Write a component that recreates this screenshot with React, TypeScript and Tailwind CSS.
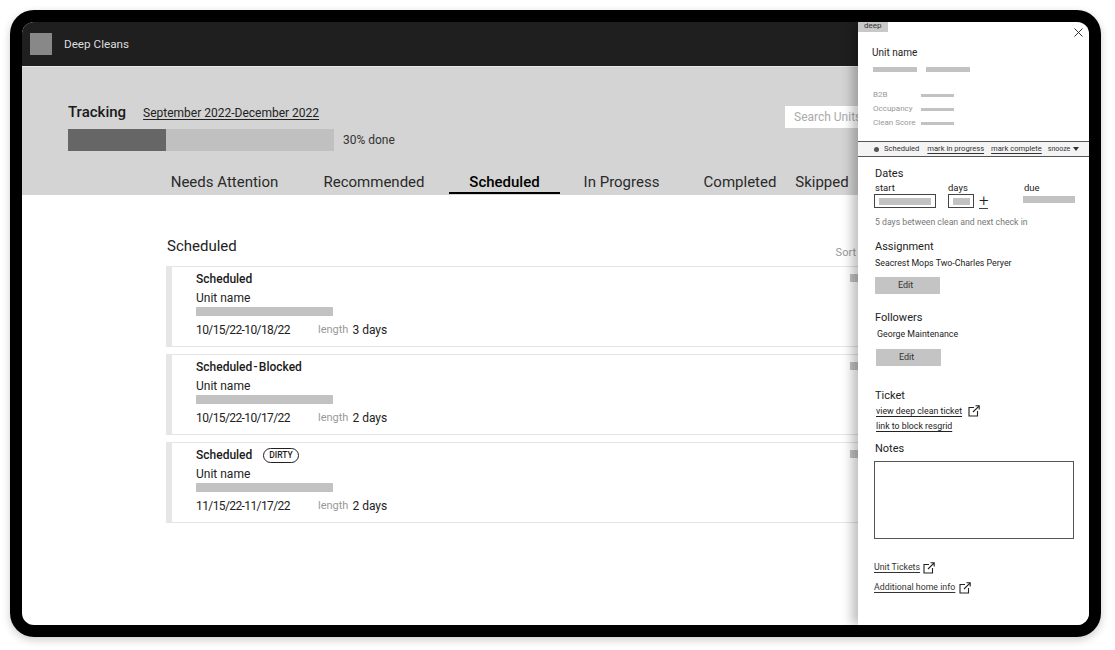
import { X } from "lucide-react";

const font = { fontFamily: "Roboto, sans-serif" };

const cards = [
    { title: "Scheduled", dates: "10/15/22-10/18/22", days: "3 days", gap: "mt-[9px]" },
    { title: "Scheduled\u200a-\u200aBlocked", dates: "10/15/22-10/17/22", days: "2 days", gap: "mt-[7px]" },
    { title: "Scheduled", dirty: true, dates: "11/15/22-11/17/22", days: "2 days", gap: "mt-[7px]" },
];

const tabs = [
    { name: "Needs Attention", cls: "ml-[149px] w-[107px]" },
    { name: "Recommended", cls: "ml-[47px] w-[98px]" },
    { name: "Scheduled", cls: "ml-[26px] w-[111px] font-medium text-black border-b-2 border-black", },
    { name: "In Progress", cls: "ml-[25px] w-[73px]" },
    { name: "Completed", cls: "ml-[46px] w-[72px]" },
    { name: "Skipped", cls: "ml-[19px] w-[54px]" },
];

function ExternalIcon({ className }: { className?: string }) {
    return (
        <svg viewBox="0 0 12 12" className={className} fill="none" stroke="#222" strokeWidth="1.1">
            <path d="M6 2.5H1v8.5h8.5V6" />
            <path d="M5 7l6.2-6.2M7.5 .8h3.7v3.7" />
        </svg>
    );
}

function Card({ title, dirty, dates, days, gap }: { title: string; dirty?: boolean; dates: string; days: string; gap: string }) {
    return (
        <div className={`${gap} h-[81px] border border-[#e4e4e4] border-l-[6px] border-l-[#e6e6e6] pl-[24px] pt-[4px] relative`}>
            <div className="flex items-center h-[16px] text-[12px] font-medium text-[#1a1a1a]">
                {title}
                {dirty && (
                    <span className="ml-[11px] h-[15px] px-[5px] flex items-center rounded-full border border-[#222] text-[8.5px] leading-[13px] font-medium">DIRTY</span>
                )}
            </div>
            <div className="mt-[3px] h-[16px] text-[12px] leading-[16px] text-[#222]">Unit name</div>
            <div className="mt-[1px] h-[9px] w-[137px] bg-[#c2c2c2]" />
            <div className="mt-[6px] flex items-center text-[12px] h-[16px] text-[#222]">
                <span className="w-[122px] tracking-[-0.6px]">{dates}</span>
                <span className="text-[11px] text-[#999] mr-[4px] mt-[1px]">length</span>
                <span>{days}</span>
            </div>
            <div className="absolute left-[678px] top-[7px] h-[8px] w-[40px] bg-[#c2c2c2]" />
        </div>
    );
}

function Meta({ label, mt }: { label: string; mt: string }) {
    return (
        <div className={`${mt} flex items-center h-[12px]`}>
            <span className="w-[48px] text-[8px] text-[#999]">{label}</span>
            <span className="h-[3px] w-[33px] bg-[#c2c2c2]" />
        </div>
    );
}

function Detail() {
    return (
        <aside className="absolute right-0 top-0 bottom-0 w-[231px] bg-white shadow-[-6px_0_10px_rgba(0,0,0,0.25)] text-[#222]">
            <div className="absolute left-0 top-0 h-[10px] w-[30px] bg-[#c8c8c8] pl-[6px] text-[8px] leading-[8px] text-[#333]">deep</div>
            <X strokeWidth={1.5} className="absolute right-[3px] top-[3px] w-[15px] h-[15px] text-[#222]" />

            <div className="pl-[15px] pt-[25px]">
                <div className="text-[10px] leading-[12px] -ml-[1px]">Unit name</div>
                <div className="mt-[8px] flex gap-[9px]">
                    <span className="h-[5px] w-[44px] bg-[#c2c2c2]" />
                    <span className="h-[5px] w-[44px] bg-[#c2c2c2]" />
                </div>
                <Meta label="B2B" mt="mt-[17px]" />
                <Meta label="Occupancy" mt="mt-[2px]" />
                <Meta label="Clean Score" mt="mt-[2px]" />
            </div>

            <div className="mt-[12px] h-[16px] border-y border-[#555] bg-[#f4f4f4] flex items-center pl-[16px] text-[7.6px] text-[#333]">
                <span className="w-[5px] h-[5px] rounded-full bg-[#555] mr-[5px]" />
                <span className="mr-[8px]">Scheduled</span>
                <span className="underline underline-offset-2 mr-[7px]">mark in progress</span>
                <span className="underline underline-offset-2 mr-[6px]">mark complete</span>
                <span className="text-[7px]">snooze</span>
                <span className="ml-[3px] w-0 h-0 border-x-[3px] border-x-transparent border-t-[4px] border-t-[#333]" />
            </div>

            <div className="pl-[17px] pt-[10px]">
                <div className="text-[11px] leading-[14px]">Dates</div>
                <div className="flex text-[9.5px] leading-[10px] mt-[2px]">
                    <div className="w-[73px]">
                        <div>start</div>
                        <div className="mt-[1px] -ml-[1px] w-[62px] h-[14px] border border-[#444] flex items-center justify-center">
                            <span className="w-[52px] h-[7px] bg-[#c2c2c2]" />
                        </div>
                    </div>
                    <div className="w-[76px]">
                        <div>days</div>
                        <div className="flex mt-[1px]">
                            <div className="w-[26px] h-[14px] border border-[#444] flex items-center justify-center">
                                <span className="w-[17px] h-[7px] bg-[#c2c2c2]" />
                            </div>
                            <div className="ml-[5px] w-[9px] text-[17px] font-light leading-[12px] text-center border-b border-[#444] h-[15px]">+</div>
                        </div>
                    </div>
                    <div>
                        <div>due</div>
                        <div className="mt-[3px] -ml-[1px] w-[52px] h-[7px] bg-[#c2c2c2]" />
                    </div>
                </div>
                <div className="mt-[7px] text-[8.7px] leading-[12px] text-[#777]">5 days between clean and next check in</div>

                <div className="mt-[12px] text-[11px] leading-[14px]">Assignment</div>
                <div className="mt-[3px] text-[8.8px] leading-[12px]">Seacrest Mops Two-Charles Peryer</div>
                <button className="block mt-[8px] w-[65px] h-[17px] pr-[4px] bg-[#c4c4c4] text-[9px] text-[#333]">Edit</button>

                <div className="mt-[17px] text-[11px] leading-[14px]">Followers</div>
                <div className="mt-[3px] ml-[2px] text-[8.8px] leading-[12px]">George Maintenance</div>
                <button className="block mt-[9px] ml-[1px] w-[65px] h-[17px] pr-[4px] bg-[#c4c4c4] text-[9px] text-[#333]">Edit</button>

                <div className="mt-[23px] text-[11px] leading-[14px]">Ticket</div>
                <div className="mt-[2px] ml-[1px] flex items-center text-[8.8px] leading-[12px] h-[12px]">
                    <span className="underline underline-offset-2">view deep clean ticket</span>
                    <ExternalIcon className="ml-[6px] w-[12px] h-[12px]" />
                </div>
                <div className="mt-[3px] ml-[1px] text-[8.8px] leading-[12px] underline underline-offset-2">link to block resgrid</div>

                <div className="mt-[10px] text-[11px] leading-[14px]">Notes</div>
                <div className="mt-[5px] -ml-[1px] w-[200px] h-[78px] border border-[#555]" />

                <div className="mt-[22px] -ml-[1px] flex items-center text-[8.8px] h-[14px] text-[#333]">
                    <span className="underline underline-offset-2">Unit Tickets</span>
                    <ExternalIcon className="ml-[3px] w-[12px] h-[12px]" />
                </div>
                <div className="mt-[6px] -ml-[1px] flex items-center text-[8.8px] h-[14px] text-[#333]">
                    <span className="underline underline-offset-2">Additional home info</span>
                    <ExternalIcon className="ml-[4px] w-[12px] h-[12px]" />
                </div>
            </div>
        </aside>
    );
}

export default function App() {
    return (
        <div style={font} className="w-[1115px] h-[650px] bg-white pl-[10px] pt-[10px] overflow-hidden">
            <div className="w-[1091px] h-[627px] bg-black rounded-[24px] p-[12px] shadow-[0_3px_8px_rgba(0,0,0,0.2)]">
                <div className="relative w-full h-full bg-white rounded-[12px] overflow-hidden">
                    <header className="h-[45px] bg-[#1f1f1f] border-b border-[#e8e8e8] flex items-center pl-[8px]">
                        <div className="w-[22px] h-[22px] bg-[#888]" />
                        <span className="ml-[12px] mt-[1px] text-[11.7px] text-[#ddd]">Deep Cleans</span>
                    </header>

                    <section className="h-[128px] bg-[#d4d4d4] relative pt-[37px]">
                        <div className="pl-[46px] flex items-center h-[16px]">
                            <span className="text-[15px] font-medium text-[#1a1a1a]">Tracking</span>
                            <span className="ml-[17px] text-[12px] mt-[2px] text-[#222] underline underline-offset-2">September 2022-December 2022</span>
                        </div>
                        <div className="pl-[46px] mt-[9px] flex items-center">
                            <div className="w-[266px] h-[22px] bg-[#c0c0c0]">
                                <div className="w-[98px] h-full bg-[#666]" />
                            </div>
                            <span className="ml-[9px] text-[12px] text-[#333]">30% done</span>
                        </div>
                        <nav className="flex mt-[19px] text-[15px] text-[#2a2a2a]">
                            {tabs.map((tab) => (
                                <div key={tab.name} className={`${tab.cls} h-[24px] shrink-0 whitespace-nowrap flex justify-center leading-[24px]`}>
                                    {tab.name}
                                </div>
                            ))}
                        </nav>
                        <div className="absolute left-[763px] top-[39px] w-[120px] h-[22px] bg-white pl-[9px] text-[12px] leading-[22px] text-[#aaa]">Search Units</div>
                    </section>

                    <main className="pl-[144px] pt-[42px] w-[1000px]">
                        <div className="flex items-center justify-between h-[18px]">
                            <span className="text-[15px] text-[#222] ml-[1px]">Scheduled</span>
                            <span className="text-[11px] text-[#999] mr-[166px] mt-[14px]">Sort</span>
                        </div>
                        <div className="mt-[11px]">
                            {cards.map((card, i) => (
                                <Card key={i} {...card} />
                            ))}
                        </div>
                    </main>

                    <Detail />
                </div>
            </div>
        </div>
    );
}
